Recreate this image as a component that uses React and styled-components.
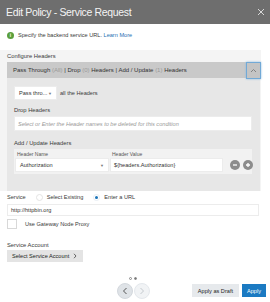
import React from "react";
import styled, { createGlobalStyle } from "styled-components";

const GlobalStyle = createGlobalStyle`
  html, body {
    margin: 0;
    padding: 0;
    background: #ffffff;
  }
  body {
    font-family: "Liberation Sans", Arial, sans-serif;
    color: #3a3a3a;
  }
  * {
    box-sizing: border-box;
  }
`;

const Dialog = styled.div`
  width: 270px;
  height: 302px;
  overflow: hidden;
  display: flex;
  flex-direction: column;
  background: #ffffff;
`;

const TitleBar = styled.div`
  height: 24px;
  flex: none;
  background: #6e6e6e;
  display: flex;
  align-items: center;
  justify-content: space-between;
  padding: 0 5px 0 6px;
  color: #ffffff;
`;

const Title = styled.div`
  font-size: 10.5px;
  font-weight: 300;
  letter-spacing: -0.35px;
  color: #f4f4f4;
`;

const Close = styled.svg`
  width: 8px;
  height: 8px;
  stroke: #d8d8d8;
  stroke-width: 1;
`;

const InfoRow = styled.div`
  height: 22px;
  display: flex;
  align-items: center;
  gap: 4px;
  padding-left: 7px;
  font-size: 5.6px;
`;

const InfoIcon = styled.span`
  width: 7px;
  height: 7px;
  border-radius: 50%;
  background: #5b9f3c;
  color: #ffffff;
  font-size: 5px;
  font-weight: 700;
  display: inline-flex;
  align-items: center;
  justify-content: center;
`;

const LinkText = styled.span`
  color: #1f6fb2;
`;

const Section = styled.div`
  margin-top: 4px;
  width: 261px;
  background: #f4f4f4;
  padding: 0 1px 0 7px;
`;

const Label = styled.div`
  height: ${({ h }) => h || 12}px;
  display: flex;
  align-items: center;
  font-size: ${({ size }) => size || 5.8}px;
  color: #3a3a3a;
`;

const Panel = styled.div`
  width: 253px;
  background: #e7e7e7;
`;

const PanelHeader = styled.div`
  height: 16px;
  background: #c9c9c9;
  display: flex;
  align-items: center;
  justify-content: space-between;
  padding-left: 6px;
  font-size: 6px;
  color: #333333;
`;

const Muted = styled.span`
  color: #9a9a9a;
`;

const ToggleButton = styled.div`
  width: 15px;
  height: 17px;
  margin-right: -1px;
  border: 1px solid #72a9d6;
  box-shadow: 0 0 2px #8dbbe0;
  background: #c4c4c4;
  display: flex;
  align-items: center;
  justify-content: center;
`;

const PanelBody = styled.div`
  padding: 8px 8px 17px 7px;
`;

const InlineRow = styled.div`
  display: flex;
  align-items: center;
  gap: 3px;
  height: 14px;
  font-size: 5.6px;
`;

const SelectBox = styled.div`
  width: ${({ w }) => w}px;
  height: 14px;
  background: #ffffff;
  border: 1px solid #ececec;
  display: flex;
  align-items: center;
  justify-content: space-between;
  padding: 0 4px 0 4px;
  font-size: 5.6px;
  color: #333333;
  flex: none;
`;

const Caret = styled.span`
  font-size: 4px;
  color: #777777;
`;

const TextInput = styled.div`
  height: ${({ h }) => h || 15}px;
  width: ${({ w }) => (w ? `${w}px` : "100%")};
  background: #ffffff;
  border: 1px solid #ececec;
  display: flex;
  align-items: center;
  padding: 0 3px;
  font-size: 5.6px;
  font-style: ${({ italic }) => (italic ? "italic" : "normal")};
  color: ${({ italic }) => (italic ? "#9a9a9a" : "#333333")};
  flex: none;
`;

const HeadersBox = styled.div`
  background: #f2f2f2;
  padding: 0 0 2px 1px;
`;

const ColumnLabels = styled.div`
  display: grid;
  grid-template-columns: 95px 1fr;
  height: 9px;
  align-items: center;
  padding-left: 2px;
  font-size: 5px;
  color: #555555;
`;

const HeaderRow = styled.div`
  display: flex;
  align-items: center;
  gap: 1px;
`;

const RoundIcons = styled.div`
  display: flex;
  gap: 3px;
  margin-left: 6px;
`;

const RoundIcon = styled.span`
  width: 10px;
  height: 10px;
  border-radius: 50%;
  background: #8c8c8c;
  display: inline-flex;
  align-items: center;
  justify-content: center;
`;

const FormArea = styled.div`
  padding: 0 3px 0 7px;
`;

const RadioRow = styled.div`
  height: 12px;
  display: flex;
  align-items: center;
  font-size: 5.6px;
`;

const RadioOption = styled.label`
  display: flex;
  align-items: center;
  gap: 4px;
  margin-left: ${({ offset }) => offset}px;
`;

const Radio = styled.span`
  width: 7px;
  height: 7px;
  border-radius: 50%;
  border: 1px solid ${({ checked }) => (checked ? "#e8eef4" : "#e4e4e4")};
  display: inline-flex;
  align-items: center;
  justify-content: center;
  &::after {
    content: "";
    width: 3px;
    height: 3px;
    border-radius: 50%;
    background: ${({ checked }) => (checked ? "#1a73b8" : "transparent")};
  }
`;

const CheckRow = styled.div`
  height: 12px;
  margin-top: 2px;
  display: flex;
  align-items: center;
  gap: 8px;
  font-size: 5.6px;
`;

const Checkbox = styled.span`
  width: 10px;
  height: 10px;
  border: 1px solid #d8d8d8;
  background: #ffffff;
`;

const GreyButton = styled.div`
  width: 76px;
  height: 12px;
  background: #e4e4e4;
  display: flex;
  align-items: center;
  gap: 4px;
  padding-left: 5px;
  font-size: 5.6px;
  color: #222222;
`;

const Footer = styled.div`
  margin-top: auto;
  height: 40px;
  display: grid;
  grid-template-columns: 1fr auto 1fr;
  align-items: end;
  padding: 0 4px 5px 0;
`;

const Pager = styled.div`
  grid-column: 2;
  display: flex;
  flex-direction: column;
  align-items: center;
  gap: 3px;
  margin-bottom: -2px;
`;

const Dots = styled.div`
  display: flex;
  gap: 2px;
`;

const Dot = styled.span`
  width: 3px;
  height: 3px;
  border-radius: 50%;
  border: 0.6px solid #888888;
  background: ${({ filled }) => (filled ? "#777777" : "#ffffff")};
`;

const Arrows = styled.div`
  display: flex;
  gap: 1px;
`;

const ArrowButton = styled.span`
  width: 16px;
  height: 16px;
  border-radius: 50%;
  background: ${({ active }) => (active ? "#dfe3e7" : "#f1f3f5")};
  border: 1px solid ${({ active }) => (active ? "#d3d8dd" : "#e4e8ec")};
  display: flex;
  align-items: center;
  justify-content: center;
`;

const Actions = styled.div`
  grid-column: 3;
  justify-self: end;
  display: flex;
  gap: 3px;
`;

const ActionButton = styled.div`
  height: 13px;
  padding: 0 ${({ primary }) => (primary ? 5 : 6)}px;
  display: flex;
  align-items: center;
  font-size: 5.6px;
  background: ${({ primary }) => (primary ? "#1b7ac2" : "#e6e9ec")};
  color: ${({ primary }) => (primary ? "#ffffff" : "#222222")};
`;

export default function App() {
  return (
    <>
      <GlobalStyle />
      <Dialog>
        <TitleBar>
          <Title>Edit Policy - Service Request</Title>
          <Close viewBox="0 0 8 8">
            <path d="M1 1 L7 7 M7 1 L1 7" />
          </Close>
        </TitleBar>

        <InfoRow>
          <InfoIcon>i</InfoIcon>
          <span>
            Specify the backend service URL. <LinkText>Learn More</LinkText>
          </span>
        </InfoRow>

        <Section>
          <Label>Configure Headers</Label>
          <Panel>
            <PanelHeader>
              <span>
                Pass Through <Muted>(All)</Muted> | Drop <Muted>(0)</Muted>{" "}
                Headers | Add / Update <Muted>(1)</Muted> Headers
              </span>
              <ToggleButton>
                <svg width="7" height="5" viewBox="0 0 7 5">
                  <path d="M1 4 L3.5 1.5 L6 4" fill="none" stroke="#7a7a7a" strokeWidth="0.9" />
                </svg>
              </ToggleButton>
            </PanelHeader>
            <PanelBody>
              <InlineRow>
                <SelectBox w={43}>
                  <span>Pass thro...</span>
                  <Caret>▼</Caret>
                </SelectBox>
                <span>all the Headers</span>
              </InlineRow>
              <Label h={16} style={{ paddingTop: 3 }}>
                Drop Headers
              </Label>
              <TextInput italic>
                Select or Enter the Header names to be deleted for this condition
              </TextInput>
              <Label h={18} style={{ paddingTop: 6 }}>
                Add / Update Headers
              </Label>
              <HeadersBox>
                <ColumnLabels>
                  <span>Header Name</span>
                  <span>Header Value</span>
                </ColumnLabels>
                <HeaderRow>
                  <SelectBox w={94}>
                    <span>Authorization</span>
                    <Caret>▼</Caret>
                  </SelectBox>
                  <TextInput h={14} w={113}>
                    ${"{"}headers.Authorization{"}"}
                  </TextInput>
                  <RoundIcons>
                    <RoundIcon>
                      <svg width="6" height="6" viewBox="0 0 6 6">
                        <path d="M1 3 H5" stroke="#ffffff" strokeWidth="1.3" />
                      </svg>
                    </RoundIcon>
                    <RoundIcon>
                      <svg width="6" height="6" viewBox="0 0 6 6">
                        <path d="M1 3 H5 M3 1 V5" stroke="#ffffff" strokeWidth="1.3" />
                      </svg>
                    </RoundIcon>
                  </RoundIcons>
                </HeaderRow>
              </HeadersBox>
            </PanelBody>
          </Panel>
        </Section>

        <FormArea>
          <RadioRow>
            <span>Service</span>
            <RadioOption offset={10}>
              <Radio />
              Select Existing
            </RadioOption>
            <RadioOption offset={10}>
              <Radio checked />
              Enter a URL
            </RadioOption>
          </RadioRow>
          <TextInput h={12} w={252} style={{ marginTop: 1 }}>
            http://httpbin.org
          </TextInput>
          <CheckRow>
            <Checkbox />
            <span>Use Gateway Node Proxy</span>
          </CheckRow>
          <Label h={10} style={{ marginTop: 10 }}>
            Service Account
          </Label>
          <GreyButton>
            Select Service Account
            <svg width="4" height="6" viewBox="0 0 4 6">
              <path d="M1 0.8 L3 3 L1 5.2" fill="none" stroke="#444444" strokeWidth="0.8" />
            </svg>
          </GreyButton>
        </FormArea>

        <Footer>
          <Pager>
            <Dots>
              <Dot />
              <Dot filled />
            </Dots>
            <Arrows>
              <ArrowButton active>
                <svg width="6" height="8" viewBox="0 0 6 8">
                  <path d="M4.5 1 L1.5 4 L4.5 7" fill="none" stroke="#555555" strokeWidth="1" />
                </svg>
              </ArrowButton>
              <ArrowButton>
                <svg width="6" height="8" viewBox="0 0 6 8">
                  <path d="M1.5 1 L4.5 4 L1.5 7" fill="none" stroke="#c4c9ce" strokeWidth="1" />
                </svg>
              </ArrowButton>
            </Arrows>
          </Pager>
          <Actions>
            <ActionButton>Apply as Draft</ActionButton>
            <ActionButton primary>Apply</ActionButton>
          </Actions>
        </Footer>
      </Dialog>
    </>
  );
}
